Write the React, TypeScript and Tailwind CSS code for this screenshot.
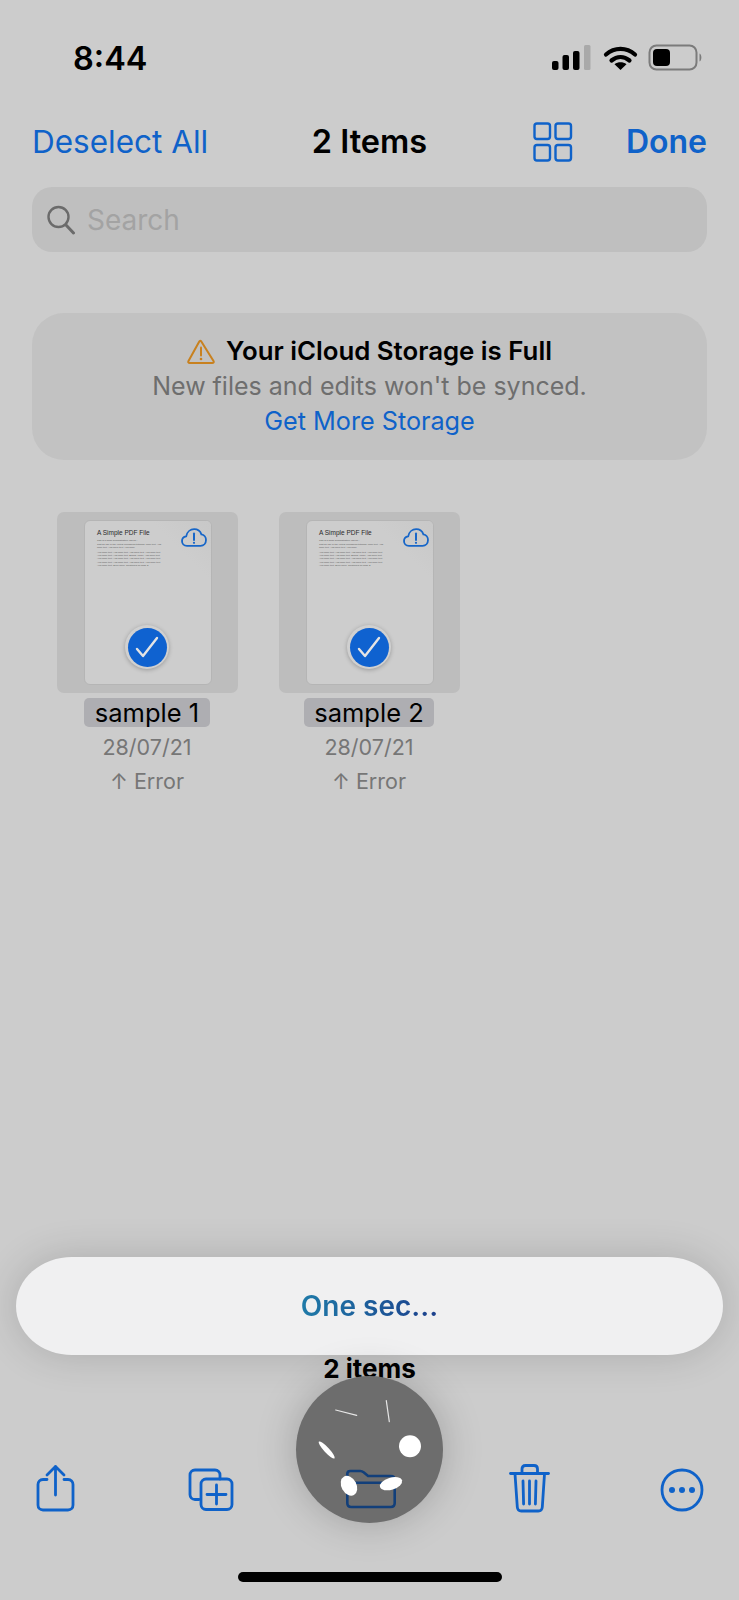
const blue = "#0f62c9";

function StatusIcons() {
  return (
    <svg width="152" height="28" viewBox="0 0 152 28" className="overflow-visible">
      <rect x="0" y="17" width="6.5" height="9" rx="2" fill="#000" />
      <rect x="10.5" y="11" width="6.5" height="15" rx="2" fill="#000" />
      <rect x="21" y="7" width="6.5" height="19" rx="2" fill="#000" />
      <rect x="32" y="1" width="6.5" height="25" rx="1.5" fill="#a9a9a9" />
      <path d="M54 10.5c8.500-7.500 20.500-7.500 29 0" fill="none" stroke="#000" strokeWidth="4.2" strokeLinecap="round" />
      <path d="M59.500 16.5c5.500-4.500 12.500-4.500 18 0" fill="none" stroke="#000" strokeWidth="4.2" strokeLinecap="round" />
      <path d="M68.500 26l-6-5.800c3.500-2.600 8.500-2.600 12 0z" fill="#000" />
      <rect x="97.5" y="1.5" width="47" height="24" rx="7" fill="none" stroke="#7b7b7b" strokeWidth="2" />
      <rect x="101" y="5" width="17" height="17" rx="4" fill="#000" />
      <path d="M147.500 9.500c2.500 1 2.500 7 0 8z" fill="#7b7b7b" />
    </svg>
  );
}

function GridIcon() {
  return (
    <svg width="40" height="40" viewBox="0 0 40 40" fill="none" stroke={blue} strokeWidth="2.4">
      <rect x="1.5" y="1.5" width="15.5" height="15.5" rx="2.5" />
      <rect x="22.5" y="1.5" width="15.5" height="15.5" rx="2.5" />
      <rect x="1.5" y="23" width="15.5" height="15.5" rx="2.5" />
      <rect x="22.5" y="23" width="15.5" height="15.5" rx="2.5" />
    </svg>
  );
}

function SearchIcon() {
  return (
    <svg width="30" height="30" viewBox="0 0 30 30" fill="none" stroke="#6b6b6b" strokeLinecap="round">
      <circle cx="12.5" cy="12" r="10" strokeWidth="2.4" />
      <path d="M20 20l7.500 8" strokeWidth="3" />
    </svg>
  );
}

function WarningIcon() {
  return (
    <svg width="28" height="25" viewBox="0 0 28 25" fill="none" className="mr-[11px]">
      <path d="M14 2L26.500 22c.6 1.200 0 2-1.200 2H2.700c-1.200 0-1.800-.8-1.200-2L12 3c.7-1.200 1.400-1.400 2-1z" stroke="#c8811f" strokeWidth="2" strokeLinejoin="round" />
      <path d="M14 8.500v8" stroke="#c8811f" strokeWidth="2" strokeLinecap="round" />
      <circle cx="14" cy="20" r="1.3" fill="#c8811f" />
    </svg>
  );
}

function CloudAlert() {
  return (
    <svg width="26" height="19" viewBox="0 0 26 19" fill="none">
      <path d="M6 17.800C2.800 17.800 1 15.600 1 13c0-2.500 1.800-4.400 4.200-4.700C6 4 9.300 1.200 13.200 1.200c3.500 0 6.200 2.200 7.200 5.200 2.800.4 4.600 2.900 4.600 5.600 0 3.200-2.300 5.800-5.500 5.800z" stroke="#1766c8" strokeWidth="1.8" />
      <path d="M13 5.500v6.500" stroke="#1766c8" strokeWidth="2" strokeLinecap="round" />
      <circle cx="13" cy="14.8" r="1.1" fill="#1766c8" />
    </svg>
  );
}

function FileTile({ name, labelWidth }: { name: string; labelWidth: string }) {
  return (
    <div className="flex w-[222px] flex-col items-center">
      <div className="flex h-[181px] w-[181px] items-center justify-center rounded-[7px] bg-[#bdbdbd]">
        <div className="relative ml-[2px] h-[165px] w-[128px] overflow-hidden rounded-[6px] border border-[#b5b5b5] bg-[#cdcdcd] px-[12px] pt-[7px]">
          <div className="absolute right-0 top-0 h-[60px] w-[60px] bg-gradient-to-bl from-[#c8c8c8] to-[#d2d2d2] [clip-path:polygon(0_0,100%_0,100%_100%)]" />
          <p className="relative whitespace-nowrap font-['Liberation_Sans',sans-serif] text-[6.5px] leading-[9px] text-[#2a2a2a]">A Simple PDF File</p>
          <div className="relative mt-[3px] w-[68px] font-['Liberation_Sans',sans-serif] text-[2.4px] leading-[2.9px] text-[#555]">
            <p className="mb-[1.5px]">This is a small demonstration .pdf file -</p>
            <p className="mb-[1.5px]">Just for use in the Virtual Mechanics tutorials. More text. And more text. And more text. And more.</p>
            <p className="mb-[1.5px]">And more text. And more text. And more text. And more text. And more text. And more text. Boring, zzzzz. And more text. And more text. And more text. And more text. And more text.</p>
            <p>And more text. And more text. And more text. And more text. And more text. Even more. Continued on page 2.</p>
          </div>
          <div className="absolute right-[4px] top-[7px]">
            <CloudAlert />
          </div>
          <div className="absolute bottom-[15px] left-[40px] flex h-[44px] w-[44px] items-center justify-center rounded-full bg-[#d0d0d0] shadow-[0_1px_4px_rgba(0,0,0,0.25)]">
            <div className="flex h-[39px] w-[39px] items-center justify-center rounded-full bg-[#0f62d0]">
              <svg width="24" height="22" viewBox="0 0 24 22" fill="none" stroke="#e4e4e4" strokeWidth="2.4" strokeLinecap="round" strokeLinejoin="round">
                <path d="M2 13l6 7L22 2" />
              </svg>
            </div>
          </div>
        </div>
      </div>
      <div className={`mt-[5px] flex h-[29px] items-center justify-center rounded-[5px] bg-[#aeaeb2] pt-[1px] text-[25.5px] text-black ${labelWidth}`}>
        {name}
      </div>
      <p className="mt-[3px] text-[21.5px] leading-[34px] text-[#767676]">28/07/21</p>
      <p className="text-[21.5px] leading-[34px] text-[#767676]">↑ Error</p>
    </div>
  );
}

function ShareIcon() {
  return (
    <svg width="44" height="52" viewBox="0 0 44 52" fill="none" stroke={blue} strokeWidth="2.8" strokeLinecap="round" strokeLinejoin="round" className="overflow-visible">
      <path d="M14 15.500H10c-3 0-5 2-5 5V41c0 3 2 5 5 5h25c3 0 5-2 5-5V20.500c0-3-2-5-5-5h-4" />
      <path d="M22.500 31V2.500M14 11l8.500-8.500L31 11" />
    </svg>
  );
}

function CopyPlusIcon() {
  return (
    <svg width="44" height="52" viewBox="0 0 44 52" fill="none" stroke={blue} strokeWidth="2.8" strokeLinecap="round" strokeLinejoin="round" className="overflow-visible">
      <path d="M9 35.500H5c-3 0-5-2-5-5V11c0-3 2-5 5-5h20c3 0 5 2 5 5v4" />
      <rect x="11" y="15" width="31" height="30.500" rx="5" />
      <path d="M26.500 21v19M17 30.500h19" />
    </svg>
  );
}

function TrashIcon() {
  return (
    <svg width="44" height="52" viewBox="0 0 44 52" fill="none" stroke={blue} strokeWidth="2.8" strokeLinecap="round" strokeLinejoin="round" className="overflow-visible">
      <path d="M5.500 9.500h38" />
      <path d="M10 10l2.300 33c.2 2.500 1.500 4 4 4h17c2.500 0 3.800-1.500 4-4L39.500 10" />
      <path d="M17 9V5c0-2 1-3.500 3.500-3.500h8.500c2.500 0 3.500 1.500 3.500 3.500v4" />
      <path d="M18 17l.6 23M24.500 17v23M31 17l-.6 23" />
    </svg>
  );
}

function MoreIcon() {
  return (
    <svg width="44" height="52" viewBox="0 0 44 52" fill="none" className="overflow-visible">
      <circle cx="20" cy="26" r="20" stroke={blue} strokeWidth="2.8" />
      <circle cx="10" cy="26" r="3" fill={blue} />
      <circle cx="20" cy="26" r="3" fill={blue} />
      <circle cx="30" cy="26" r="3" fill={blue} />
    </svg>
  );
}

function Burst() {
  return (
    <svg width="146" height="146" viewBox="0 0 146 146" fill="none">
      <path d="M39.700 34l21 5.300M90.300 24.700l3 21" stroke="#e6e6e6" strokeWidth="1.2" strokeLinecap="round" />
      <path d="M51.300 106.700V98c0-2 1-3 3-3h10c1.500 0 2.300.5 3.300 1.300l4.500 3.700h22.600c2.600 0 4 1.500 4 4v23c0 2.600-1.500 4-4 4H55.300c-2.500 0-4-1.400-4-4z M51.300 106.700h47.400" stroke="#123f7a" strokeWidth="2.6" strokeLinejoin="round" />
      <ellipse cx="30.7" cy="74" rx="11.5" ry="2.6" fill="#fff" transform="rotate(47 30.7 74)" />
      <circle cx="114" cy="70.3" r="11" fill="#fff" />
      <ellipse cx="53" cy="109.7" rx="10.5" ry="7.5" fill="#fff" transform="rotate(62 53 109.7)" />
      <ellipse cx="95" cy="107.7" rx="11.5" ry="6" fill="#fff" transform="rotate(-17 95 107.7)" />
    </svg>
  );
}

export default function App() {
  return (
    <div className="relative flex h-[1600px] w-[739px] flex-col overflow-hidden bg-[#cccccc] font-['Inter',sans-serif]">
      <div className="flex h-[116px] items-center justify-between pl-[73px] pr-[35px]">
        <span className="mt-[2px] text-[32.5px] font-semibold leading-none text-black">8:44</span>
        <StatusIcons />
      </div>

      <div className="relative flex h-[52px] items-center justify-between px-[32px]">
        <span className="text-[31.5px] text-[#0f62c9]">Deselect All</span>
        <span className="absolute left-0 right-0 text-center text-[32.5px] font-semibold text-black">2 Items</span>
        <div className="flex items-center gap-[53px]">
          <GridIcon />
          <span className="text-[32px] font-semibold text-[#0f62c9]">Done</span>
        </div>
      </div>

      <div className="mx-[32px] mt-[19px] flex h-[65px] items-center gap-[11px] rounded-[20px] bg-[#bfbfbf] pl-[14px]">
        <SearchIcon />
        <span className="text-[28px] text-[#a3a3a3]">Search</span>
      </div>

      <div className="mx-[32px] mt-[61px] flex h-[147px] flex-col items-center justify-center rounded-[32px] bg-[#c2c2c2]">
        <div className="flex h-[35px] items-center">
          <WarningIcon />
          <span className="text-[25.8px] font-semibold text-black">Your iCloud Storage is Full</span>
        </div>
        <p className="text-[25px] leading-[35px] text-[#6e6e6e]">New files and edits won't be synced.</p>
        <p className="text-[25.2px] leading-[35px] text-[#0f62c9]">Get More Storage</p>
      </div>

      <div className="mt-[52px] flex pl-[36px]">
        <FileTile name="sample 1" labelWidth="w-[126px]" />
        <FileTile name="sample 2" labelWidth="w-[130px]" />
      </div>

      <div className="mt-auto">
        <div className="flex justify-between px-[33px]">
          <ShareIcon />
          <CopyPlusIcon />
          <div className="h-[52px] w-[44px]" />
          <TrashIcon />
          <MoreIcon />
        </div>
        <div className="flex justify-center pb-[18px] pt-[56px]">
          <div className="h-[10px] w-[264px] rounded-full bg-black" />
        </div>
      </div>

      <div className="absolute left-[16px] top-[1257px] flex h-[98px] w-[707px] items-center justify-center rounded-[56px/49px] bg-[#f0f0f1] shadow-[0_0_40px_rgba(0,0,0,0.16)]">
        <span className="bg-gradient-to-r from-[#1f7aa8] to-[#1c3f8c] bg-clip-text text-[28px] font-semibold text-transparent">One sec...</span>
      </div>
      <div className="absolute left-0 right-0 top-[1349px] text-center text-[26px] font-bold text-black">2 items</div>
      <div className="absolute left-[296px] top-[1376px] h-[147px] w-[147px] rounded-full bg-[#6d6d6d] shadow-[0_0_40px_rgba(0,0,0,0.22)]">
        <Burst />
      </div>
    </div>
  );
}
